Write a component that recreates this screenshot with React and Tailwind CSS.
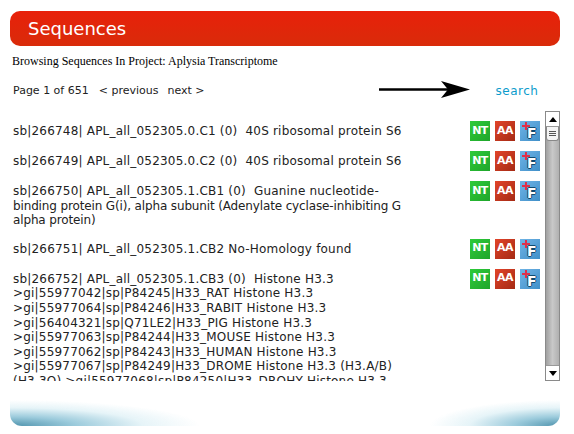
import React from "react";

const rows = [
  { text: ["sb|266748| APL_all_052305.0.C1 (0)  40S ribosomal protein S6"] },
  { text: ["sb|266749| APL_all_052305.0.C2 (0)  40S ribosomal protein S6"] },
  {
    text: [
      "sb|266750| APL_all_052305.1.CB1 (0)  Guanine nucleotide-",
      "binding protein G(i), alpha subunit (Adenylate cyclase-inhibiting G",
      "alpha protein)",
    ],
    tight: [1, 2],
    pad: "pb-[11px]",
  },
  { text: ["sb|266751| APL_all_052305.1.CB2 No-Homology found"] },
  {
    text: [
      "sb|266752| APL_all_052305.1.CB3 (0)  Histone H3.3",
      ">gi|55977042|sp|P84245|H33_RAT Histone H3.3",
      ">gi|55977064|sp|P84246|H33_RABIT Histone H3.3",
      ">gi|56404321|sp|Q71LE2|H33_PIG Histone H3.3",
      ">gi|55977063|sp|P84244|H33_MOUSE Histone H3.3",
      ">gi|55977062|sp|P84243|H33_HUMAN Histone H3.3",
      ">gi|55977067|sp|P84249|H33_DROME Histone H3.3 (H3.A/B)",
      "(H3.3O) >gi|55977068|sp|P84250|H33_DROHY Histone H3.3",
    ],
  },
];

const NtButton = () => (
  <span className="w-5 h-5 flex items-center justify-center bg-gradient-to-br from-[#2ecb3a] to-[#1fa52b] text-white text-[11px] font-bold tracking-[-0.5px]">
    NT
  </span>
);

const AaButton = () => (
  <span className="w-5 h-5 flex items-center justify-center bg-gradient-to-br from-[#e2442a] to-[#a52a14] text-white text-[11px] font-bold tracking-[-0.5px]">
    AA
  </span>
);

const FButton = () => (
  <span className="relative w-5 h-5 flex items-start bg-gradient-to-br from-[#6fb4e6] to-[#3f8fc8] text-white text-[14px] font-bold [text-shadow:1px_0_0_#0f4a6e,-1px_0_0_#0f4a6e,0_1px_0_#0f4a6e,0_-1px_0_#0f4a6e]">
    <span className="pl-[7px] pt-[5px] leading-none">F</span>
    <span className="absolute left-[2px] top-[4px] w-[8px] h-[2px] bg-[#e0304a]"></span>
    <span className="absolute left-[5px] top-px w-[2px] h-[8px] bg-[#e0304a]"></span>
  </span>
);

const Scrollbar = () => (
  <div className="w-[15px] shrink-0 flex flex-col border border-[#8a8a8a] bg-gradient-to-r from-[#a0a0a0] via-[#c8c8c8] to-[#b0b0b0]">
    <div className="h-[15px] shrink-0 bg-white border-b border-[#999] flex items-center justify-center">
      <span className="w-0 h-0 border-x-[4px] border-x-transparent border-b-[5px] border-b-black"></span>
    </div>
    <div className="h-[14px] shrink-0 bg-[#f4f4f4] border-b border-x border-[#888] rounded-b-[3px] flex flex-col items-center justify-center gap-[1px]">
      <span className="w-[7px] h-px bg-[#555]"></span>
      <span className="w-[7px] h-px bg-[#555]"></span>
      <span className="w-[7px] h-px bg-[#555]"></span>
    </div>
    <div className="flex-1"></div>
    <div className="h-[15px] shrink-0 bg-white border-t border-[#999] flex items-center justify-center">
      <span className="w-0 h-0 border-x-[4px] border-x-transparent border-t-[5px] border-t-black"></span>
    </div>
  </div>
);

export default function App() {
  return (
    <div className="w-[574px] h-[434px] bg-white overflow-hidden pt-[11px] pl-[10px] pr-[14px] font-['DejaVu_Sans',sans-serif] text-[#222]">
      <div className="h-[35px] rounded-[10px] bg-gradient-to-b from-[#e8200a] to-[#d92b0a] flex items-center pl-[18px] text-white text-[18px]">
        Sequences
      </div>

      <div className="mt-[8px] pl-[2px] font-['Liberation_Serif',serif] text-[12px] leading-[14px] text-black">
        Browsing Sequences In Project: Aplysia Transcriptome
      </div>

      <div className="mt-[14px] h-[18px] flex items-center pl-[3px] text-[11px]">
        <span>Page 1 of 651</span>
        <span className="ml-[10px]">&lt; previous</span>
        <span className="ml-[9px]">next &gt;</span>
        <svg className="ml-[174px] -mt-[2px]" width="92" height="18" viewBox="0 0 92 18">
          <path d="M0 8.5h70" stroke="#000" strokeWidth="2.5" />
          <path d="M62 0 L91 8.5 L62 17 L69 8.5Z" fill="#000" />
        </svg>
        <span className="ml-[25px] text-[12px] tracking-[0.5px] text-[#0c9ccc]">search</span>
      </div>

      <div className="mt-[11px] h-[270px] flex">
        <div className="flex-1 overflow-hidden pt-[10px] pl-[3px] text-[12px] leading-[14.6px] tracking-[0.2px]">
          {rows.map((row, i) => (
            <div key={i} className={`flex items-start ${row.pad || "pb-[10px]"}`}>
              <div className="w-[457px] pt-[3px]">
                {row.text.map((line, j) => (
                  <div
                    key={j}
                    className={row.tight && row.tight.includes(j) ? "whitespace-pre tracking-[-0.14px]" : "whitespace-pre"}
                  >
                    {line}
                  </div>
                ))}
              </div>
              <div className="flex gap-[5px]">
                <NtButton />
                <AaButton />
                <FButton />
              </div>
            </div>
          ))}
        </div>
        <Scrollbar />
      </div>

      <div className="mt-[19px] h-[26px] rounded-b-[12px] bg-[radial-gradient(ellipse_190px_26px_at_0%_100%,#4f93ad_0%,#9ccbdc_35%,#e6f4f8_70%,transparent_100%),radial-gradient(ellipse_130px_26px_at_100%_100%,#4f93ad_0%,#9ccbdc_35%,#e6f4f8_70%,transparent_100%)]"></div>
    </div>
  );
}
